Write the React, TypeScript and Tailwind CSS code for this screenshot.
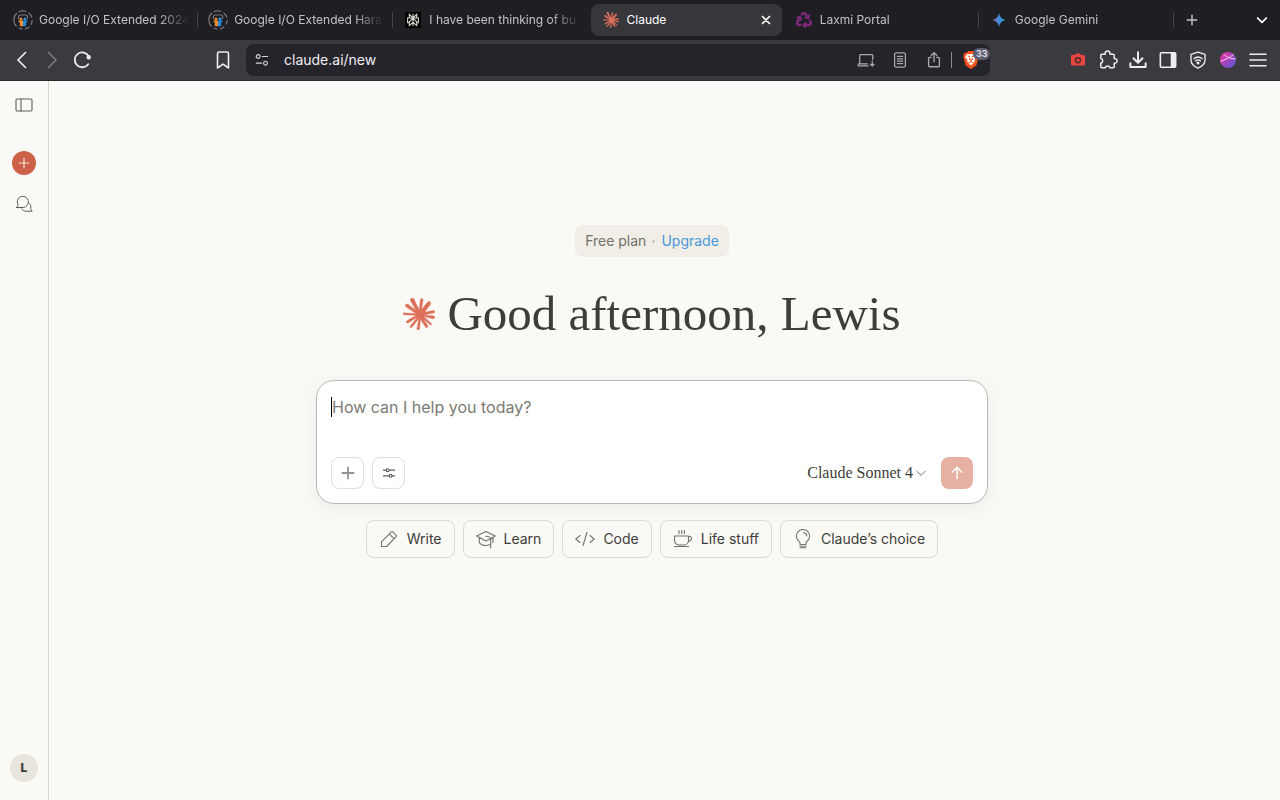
import type { ReactNode } from "react";
import { FaRecycle } from "react-icons/fa";
import { SiBrave } from "react-icons/si";

const BURST =
  "m4.7144 15.9555 4.7174-2.6471.079-.2307-.079-.1275h-.2307l-.7893-.0486-2.6956-.0729-2.3375-.0971-2.2646-.1214-.5707-.1215-.5343-.7042.0546-.3522.4797-.3218.686.0608 1.5179.1032 2.2767.1578 1.6514.0972 2.4468.255h.3886l.0546-.1579-.1336-.0971-.1032-.0972L6.973 9.8356l-2.55-1.6879-1.3356-.9714-.7225-.4918-.3643-.4614-.1578-1.0078.6557-.7225.8803.0607.2246.0607.8925.686 1.9064 1.4754 2.4893 1.8336.3643.3035.1457-.1032.0182-.0728-.164-.2733-1.3539-2.4467-1.445-2.4893-.6435-1.032-.17-.6194c-.0607-.255-.1032-.4674-.1032-.7285L6.287.1335 6.6997 0l.9957.1336.419.3642.6192 1.4147 1.0018 2.2282 1.5543 3.0296.4553.8985.2429.8318.091.255h.1579v-.1457l.1275-1.706.2368-2.0947.2307-2.6957.0789-.7589.3764-.9107.7468-.4918.5828.2793.4797.686-.0668.4433-.2853 1.8517-.5586 2.9021-.3643 1.9429h.2125l.2429-.2429.9835-1.3053 1.6514-2.0643.7286-.8196.85-.9046.5464-.4311h1.0321l.759 1.1293-.34 1.1657-1.0625 1.3478-.8804 1.1414-1.2628 1.7-.7893 1.36.0729.1093.1882-.0183 2.8535-.607 1.5421-.2794 1.8396-.3157.8318.3886.091.3946-.3278.8075-1.967.4857-2.3072.4614-3.4364.8136-.0425.0304.0486.0607 1.5482.1457.6618.0364h1.621l3.0175.2247.7892.522.4736.6376-.079.4857-1.2142.6193-1.6393-.3886-3.825-.9107-1.3113-.3279h-.1822v.1093l1.0929 1.0686 2.0035 1.8092 2.5075 2.3314.1275.5768-.3218.4554-.34-.0486-2.2039-1.6575-.85-.7468-1.9246-1.621h-.1275v.17l.4432.6496 2.3436 3.5214.1214 1.0807-.17.3521-.6071.2125-.6679-.1214-1.3721-1.9246L14.38 17.959l-1.1414-1.9428-.1397.079-.674 7.2552-.3156.3703-.7286.2793-.6071-.4614-.3218-.7468.3218-1.4753.3886-1.9246.3157-1.53.2853-1.9004.17-.6314-.0121-.0425-.1397.0182-1.4328 1.9672-2.1796 2.9446-1.7243 1.8456-.4128.164-.7164-.3704.0668-.6618.4008-.5889 2.386-3.0357 1.4389-1.882.929-1.0868-.0062-.1579h-.0546l-6.3385 4.1164-1.1293.1457-.4857-.4554.0607-.7467.2307-.2429 1.9064-1.3114Z";

function Burst({ className }: { className: string }) {
  return (
    <svg viewBox="0 0 24 24" className={className} fill="#dd7059" stroke="#dd7059" strokeWidth=".3" aria-hidden="true">
      <path d={BURST} />
    </svg>
  );
}

function Line({ children, size = 20, width = 1.2 }: { children: ReactNode; size?: number; width?: number }) {
  return (
    <svg
      width={size}
      height={size}
      viewBox="0 0 20 20"
      fill="none"
      stroke="currentColor"
      strokeWidth={width}
      strokeLinecap="round"
      strokeLinejoin="round"
      className="shrink-0"
      aria-hidden="true"
    >
      {children}
    </svg>
  );
}

function EventIcon() {
  return (
    <svg width="20" height="20" viewBox="0 0 20 20" fill="none" className="shrink-0" aria-hidden="true">
      <circle cx="10" cy="10" r="9.2" stroke="#77767a" strokeWidth="1.2" strokeDasharray="5 2.500 5 2.500 4 2.500 15 2 8 2.500 6 2.500" />
      <path d="M5.500 9V6.500A1.500 1.500 0 0 1 7 5h6a1.500 1.500 0 0 1 1.500 1.500V9" stroke="#77767a" strokeWidth="1.200" />
      <circle cx="8" cy="9" r="1.500" fill="#f08c32" />
      <circle cx="12" cy="9" r="1.500" fill="#2f9be0" />
      <path d="M5 10.500h5v5.800H6.800V13z" fill="#f08c32" />
      <path d="M15 10.500h-5v5.800h3.200V13z" fill="#2389d0" />
    </svg>
  );
}

function KnotIcon() {
  return (
    <svg width="16" height="16" viewBox="0 0 16 16" fill="none" className="shrink-0" aria-hidden="true">
      <rect width="16" height="16" rx="1" fill="#000" />
      <path
        d="M8 2v12M4.300 2.300 8 6l3.700-3.700V6H4.300zM4.300 6H2.600v4.600h1.700M11.700 6h1.700v4.600h-1.700M8 6.200 4.300 9.800v3.800L8 10.300l3.700 3.300V9.800z"
        stroke="#d7d6cf"
        strokeWidth="1.100"
      />
    </svg>
  );
}

function GeminiIcon() {
  return (
    <svg width="16" height="16" viewBox="0 0 16 16" className="shrink-0" aria-hidden="true">
      <defs>
        <linearGradient id="gemini" x1="0" y1="0" x2="1" y2="0">
          <stop offset="0" stopColor="#8a6fc4" />
          <stop offset=".45" stopColor="#4a86d8" />
          <stop offset="1" stopColor="#17a6c9" />
        </linearGradient>
      </defs>
      <path d="M8 1c.6 4 3 6.400 7 7-4 .6-6.400 3-7 7-.6-4-3-6.400-7-7 4-.6 6.400-3 7-7z" fill="url(#gemini)" />
    </svg>
  );
}

const tabs: { title: string; icon: ReactNode; active?: boolean; divider?: boolean }[] = [
  { title: "Google I/O Extended 2024", icon: <EventIcon />, divider: true },
  { title: "Google I/O Extended Hara", icon: <EventIcon />, divider: true },
  { title: "I have been thinking of bu", icon: <KnotIcon /> },
  { title: "Claude", icon: <Burst className="size-4 shrink-0" />, active: true },
  {
    title: "Laxmi Portal",
    icon: <FaRecycle size={16} color="#7b2a78" stroke="#7b2a78" strokeWidth={24} className="shrink-0" />,
    divider: true,
  },
  { title: "Google Gemini", icon: <GeminiIcon />, divider: true },
];

function TabStrip() {
  return (
    <div className="flex h-10 items-center bg-[#1f1e23] pl-[3px] text-[#c3c2c6]">
      <div className="grid h-8 min-w-0 flex-1 grid-cols-6">
        {tabs.map((tab) => (
          <div
            key={tab.title}
            className={
              tab.active
                ? "mx-[2px] flex h-8 min-w-0 items-center rounded-lg bg-[#37363b] pr-2 text-white"
                : "flex h-8 min-w-0 items-center"
            }
          >
            <button type="button" className="flex min-w-0 flex-1 items-center text-left">
              <span className="flex w-9 shrink-0 items-center justify-center pl-1">{tab.icon}</span>
              <span
                className={
                  tab.active
                    ? "min-w-0 flex-1 overflow-hidden text-xs whitespace-nowrap"
                    : "mr-2 min-w-0 flex-1 overflow-hidden mask-r-from-80% text-xs whitespace-nowrap"
                }
              >
                {tab.title}
              </span>
            </button>
            {tab.active && (
              <button type="button" aria-label="Close tab" className="flex size-4 items-center justify-center">
                <Line size={14} width={2.4}>
                  <path d="m5 5 10 10M15 5 5 15" />
                </Line>
              </button>
            )}
            {tab.divider && <span className="h-4 w-px bg-[#434247]" />}
          </div>
        ))}
      </div>
      <div className="flex w-[106px] items-center justify-between px-2">
        <button type="button" aria-label="New tab" className="flex size-5 items-center justify-center">
          <Line size={16} width={1.8}>
            <path d="M10 4v12M4 10h12" />
          </Line>
        </button>
        <button type="button" aria-label="Search tabs" className="flex size-5 items-center justify-center text-white">
          <Line size={16} width={2.2}>
            <path d="m4.500 7.500 5.500 5.500 5.500-5.500" />
          </Line>
        </button>
      </div>
    </div>
  );
}

function BarButton({ label, children }: { label: string; children: ReactNode }) {
  return (
    <button type="button" aria-label={label} className="flex h-8 w-[30px] shrink-0 items-center justify-center">
      {children}
    </button>
  );
}

function Toolbar() {
  return (
    <div className="flex items-center border-b border-[#2a252e] bg-[#3b3a3f] px-[7px] py-1 text-[#eeedf0]">
      <BarButton label="Back">
        <Line width={1.7}>
          <path d="m13.500 2.500-7.500 7.500 7.500 7.500" />
        </Line>
      </BarButton>
      <span className="text-[#7c7b80]">
        <BarButton label="Forward">
          <Line width={1.7}>
            <path d="m6.500 2.500 7.500 7.500-7.500 7.500" />
          </Line>
        </BarButton>
      </span>
      <BarButton label="Reload">
        <Line width={1.8}>
          <path d="M16.200 14.200A7.400 7.400 0 1 1 16.800 6.500" />
          <circle cx="16.700" cy="7.300" r="1.300" fill="currentColor" />
        </Line>
      </BarButton>
      <div className="w-[111px]" />
      <BarButton label="Bookmark this page">
        <Line width={1.6}>
          <path d="M4.500 3.500a1.500 1.500 0 0 1 1.500-1.500h8a1.500 1.500 0 0 1 1.500 1.500V18L10 14.200 4.500 18z" />
        </Line>
      </BarButton>
      <div className="ml-2 flex h-8 min-w-0 flex-1 items-center rounded-lg bg-[#25242a] pr-2 text-[#a9a8ad]">
        <button type="button" aria-label="Site settings" className="flex w-8 items-center justify-center text-[#d5d4d8]">
          <Line size={14} width={1.7}>
            <circle cx="4.500" cy="5" r="2.700" />
            <path d="M10.500 5H18M2 14.500h7.500" />
            <circle cx="15" cy="14.500" r="2.700" />
          </Line>
        </button>
        <input
          aria-label="Address"
          defaultValue="claude.ai/new"
          className="ml-1.5 min-w-0 flex-1 bg-transparent text-sm text-[#efeef2] outline-none"
        />
        <div className="flex items-center">
          <button type="button" aria-label="Install app" className="flex w-[34px] justify-center">
            <Line size={18} width={1.4}>
              <path d="M3 13.500V5a1 1 0 0 1 1-1h12.500a1 1 0 0 1 1 1v4.500M1.500 16.500h11M1.500 16.500v-2.200h10M17 11.500v5M15 14.800l2 2 2-2" />
            </Line>
          </button>
          <button type="button" aria-label="Reader mode" className="flex w-[34px] justify-center">
            <Line size={18} width={1.4}>
              <rect x="4" y="2" width="12" height="16" rx="1.800" />
              <path d="M7 6h6M7 8.700h6M7 11.300h6M7 14h6" />
            </Line>
          </button>
          <button type="button" aria-label="Share" className="flex w-[34px] justify-center">
            <Line size={18} width={1.5}>
              <path d="M7 7H5a1 1 0 0 0-1 1v8.500a1 1 0 0 0 1 1h10a1 1 0 0 0 1-1V8a1 1 0 0 0-1-1h-2M10 12V2M7 4.800l3-3 3 3" />
            </Line>
          </button>
          <span className="h-4 w-px bg-[#8b8a90]" />
          <button type="button" aria-label="Brave Shields" className="relative flex w-[30px] items-center pl-2.5">
            <svg width="18" height="18" viewBox="0 0 24 24" className="absolute" aria-hidden="true">
              <path d="M7 3h10l4 4-3 11-6 5-6-5L3 7z" fill="#fff" />
            </svg>
            <SiBrave size={18} color="#f9501e" className="relative" />
            <span className="absolute -top-[3px] left-[21px] rounded-full bg-[#5c5e70] px-[3px] text-[9px] leading-3 font-semibold text-[#e6e6ee]">
              33
            </span>
          </button>
        </div>
      </div>
      <div className="w-[73px]" />
      <BarButton label="Screenshot">
        <svg width="16" height="16" viewBox="0 0 16 16" aria-hidden="true">
          <path d="M2 3h3l1-1.500h4L11 3h3a1 1 0 0 1 1 1v8.500a1 1 0 0 1-1 1H2a1 1 0 0 1-1-1V4a1 1 0 0 1 1-1z" fill="#e8463e" />
          <circle cx="8" cy="8.200" r="2.500" fill="none" stroke="#4a2b30" strokeWidth="1.400" />
        </svg>
      </BarButton>
      <BarButton label="Extensions">
        <Line size={20} width={1.5}>
          <path d="M2.800 5.200a1 1 0 0 1 1-1h3.400a2.500 2.500 0 1 1 4.800 0h3.200a1 1 0 0 1 1 1v3.300a2.400 2.400 0 1 1 0 4.700v3.500a1 1 0 0 1-1 1H12a2.500 2.500 0 0 0-4.800 0H3.800a1 1 0 0 1-1-1v-3.500a2.400 2.400 0 0 0 0-4.700z" />
        </Line>
      </BarButton>
      <BarButton label="Downloads">
        <Line size={18} width={2.2}>
          <path d="M10 1.500v11M5 8l5 5 5-5M1.500 13.500v4.200h17v-4.200" />
        </Line>
      </BarButton>
      <BarButton label="Side panel">
        <Line size={18} width={1.8}>
          <rect x="1.500" y="2" width="17" height="16" rx="1" />
          <path d="M13 2h5.500v16H13z" fill="currentColor" stroke="none" />
        </Line>
      </BarButton>
      <BarButton label="VPN">
        <Line size={18} width={1.5}>
          <path d="m10 1.200 7.800 2.600v6.400c0 4-3.300 6.800-7.800 8.800-4.500-2-7.800-4.800-7.800-8.800V3.800z" />
          <path d="M5.600 8.500c2.600-2.100 6.200-2.100 8.800 0M7.300 10.900c1.600-1.200 3.800-1.200 5.400 0" />
          <circle cx="10" cy="13.300" r=".9" fill="currentColor" />
        </Line>
      </BarButton>
      <BarButton label="Profile">
        <svg width="16" height="16" viewBox="0 0 16 16" aria-hidden="true">
          <defs>
            <linearGradient id="profile" x1="0" y1="0" x2="1" y2="1">
              <stop offset=".2" stopColor="#d936a4" />
              <stop offset="1" stopColor="#4a5be0" />
            </linearGradient>
          </defs>
          <circle cx="8" cy="8" r="8" fill="url(#profile)" />
          <path d="M.5 9.500C5 7.500 10 5.500 13.500 2.500M3.500 2c2 2 5 4.500 12 5" stroke="#f4cfee" strokeWidth="1" fill="none" />
        </svg>
      </BarButton>
      <BarButton label="Menu">
        <Line size={20} width={1.6}>
          <path d="M2 4.200h16M2 10h16M2 15.800h16" />
        </Line>
      </BarButton>
    </div>
  );
}

function Sidebar() {
  return (
    <aside className="flex w-[49px] shrink-0 flex-col items-center border-r border-[#d6d5d0] pt-3 pb-[18px] text-[#5e5d59]">
      <button type="button" aria-label="Open sidebar" className="flex size-6 items-center justify-center">
        <Line width={1.1}>
          <rect x="2" y="4" width="16" height="12" rx="1.200" />
          <path d="M7 4v12" />
        </Line>
      </button>
      <button
        type="button"
        aria-label="New chat"
        className="mt-[34px] flex size-6 items-center justify-center rounded-full bg-[#cc6148] text-[#f8e4dc]"
      >
        <Line size={16} width={1.5}>
          <path d="M10 4v12M4 10h12" />
        </Line>
      </button>
      <button type="button" aria-label="Chats" className="mt-[17px] flex size-6 items-center justify-center">
        <Line width={1}>
          <path d="M2.500 13.300c1-.6 1.500-1.300 1.700-2.200a5.600 5.600 0 1 1 4.900 2.400H2.500z" />
          <path d="M15.600 9.500c1.300 1.300 1.600 3.100.9 4.700.2 1.200.8 2.200 1.700 3h-6.300c-1.800 0-3.200-.9-4-2.300" />
        </Line>
      </button>
      <button
        type="button"
        aria-label="Account"
        className="mt-auto flex size-7 items-center justify-center rounded-full bg-[#e8e6dc] text-xs font-extrabold text-[#3d3d3a]"
      >
        L
      </button>
    </aside>
  );
}

const prompts: { label: string; icon: ReactNode }[] = [
  {
    label: "Write",
    icon: <path d="m2.500 12.800 9.800-10a1 1 0 0 1 1.400 0l3.500 3.500a1 1 0 0 1 0 1.400L7.600 17.500H2.500zM10.300 4.900l4.800 4.800" />,
  },
  {
    label: "Learn",
    icon: (
      <>
        <path d="M10 2.500.6 7 10 12l9.300-5zM3.300 8.800v4.800c1.300 1.800 3.700 2.900 6.500 2.900 1.500 0 2.900-.3 4-.9M17 8.800v4.600" />
        <path d="M9.800 7.300c2.700 0 4.900 1 4.900 3v8.500" />
      </>
    ),
  },
  { label: "Code", icon: <path d="M5 6.500.8 10 5 13.500M15 6.500l4.200 3.500-4.200 3.500M12 3.500l-4 13" /> },
  {
    label: "Life stuff",
    icon: (
      <path d="M1.500 7h14v4.500a4.500 4.500 0 0 1-4.500 4.500H6a4.500 4.500 0 0 1-4.500-4.500zM15.500 7.500h1.200c1.100 0 1.800.8 1.800 1.800 0 1.700-1.400 3-3.200 3M1.500 17.500h14M6 1.500v3.200M8.700 1.500v3.200M11.400 1.500v3.200" />
    ),
  },
  {
    label: "Claude’s choice",
    icon: (
      <path d="M7 15.500v-1.600c0-.6-.4-1-.9-1.500a6.600 6.600 0 1 1 7.800 0c-.5.500-.9.900-.9 1.500v1.600zM6.800 17.200h6.400M7.300 18.800h5.400M10.500 3.700c1.900.2 3.100 1.400 3.300 3.200" />
    ),
  },
];

function Composer() {
  return (
    <form
      className="w-full rounded-[18px] border border-[#b9b8b4] bg-white p-3.5 shadow-[0_4px_20px_rgba(0,0,0,0.06)]"
      onSubmit={(e) => e.preventDefault()}
    >
      <div className="flex">
        <span className="mt-[2px] h-5 w-px bg-black" />
        <textarea
          aria-label="Message"
          placeholder="How can I help you today?"
          className="block h-12 flex-1 resize-none bg-transparent text-base leading-6 text-[#3d3d3a] outline-none placeholder:text-[#7b7a74]"
        />
      </div>
      <div className="mt-3.5 flex items-center gap-2">
        <button
          type="button"
          aria-label="Add content"
          className="flex h-8 w-[33px] items-center justify-center rounded-lg border border-[#dededb] text-[#92918c]"
        >
          <Line size={16} width={2.2}>
            <path d="M10 3v14M3 10h14" />
          </Line>
        </button>
        <button
          type="button"
          aria-label="Tools"
          className="flex h-8 w-[33px] items-center justify-center rounded-lg border border-[#dededb] text-[#5e5d59]"
        >
          <Line size={16} width={1.5}>
            <path d="M3 6.500h3.500M10.500 6.500H17M3 13.500h7M14 13.500h3" />
            <circle cx="8.300" cy="6.500" r="1.800" />
            <circle cx="12" cy="13.500" r="1.800" />
          </Line>
        </button>
        <button
          type="button"
          className="ml-auto flex items-center gap-[2px] font-['Liberation_Serif',serif] text-base text-[#3d3d3a]"
        >
          Claude Sonnet 4
          <Line size={12} width={1.2}>
            <path d="m3 7 7 7 7-7" />
          </Line>
        </button>
        <button
          type="submit"
          aria-label="Send message"
          className="ml-1.5 flex size-8 items-center justify-center rounded-lg bg-[#e6b0a3] text-white"
        >
          <Line size={16} width={1.9}>
            <path d="M10 17V3.500M4 9l6-6 6 6" />
          </Line>
        </button>
      </div>
    </form>
  );
}

export default function App() {
  return (
    <div className="flex min-h-screen flex-col bg-[#faf9f5] font-['Inter',sans-serif]">
      <TabStrip />
      <Toolbar />
      <div className="flex flex-1">
        <Sidebar />
        <main className="flex min-w-0 flex-1 flex-col items-center pt-36 pr-[25px]">
          <div className="flex h-8 items-center gap-1.5 rounded-lg bg-[#f0eee6] px-2.5 text-sm text-[#73726c]">
            <span>Free plan</span>
            <span className="size-[3px] rounded-full bg-[#c4c3bc]" />
            <a href="#upgrade" className="text-[#4a97d9]">
              Upgrade
            </a>
          </div>
          <div className="mt-[29px] mb-[38px] flex items-center gap-3">
            <Burst className="size-8" />
            <h1 className="font-['Liberation_Serif',serif] text-[49px] leading-[56px] text-[#3d3d3a]">
              Good afternoon, Lewis
            </h1>
          </div>
          <div className="w-full max-w-[672px]">
            <Composer />
          </div>
          <div className="mt-4 flex flex-wrap justify-center gap-2">
            {prompts.map((p) => (
              <button
                key={p.label}
                type="button"
                className="flex h-[38px] items-center gap-2 rounded-lg border border-[#dad9d4] px-3 text-sm text-[#3d3d3a]"
              >
                <span className="text-[#73726c]">
                  <Line width={1.1}>{p.icon}</Line>
                </span>
                {p.label}
              </button>
            ))}
          </div>
        </main>
      </div>
    </div>
  );
}
